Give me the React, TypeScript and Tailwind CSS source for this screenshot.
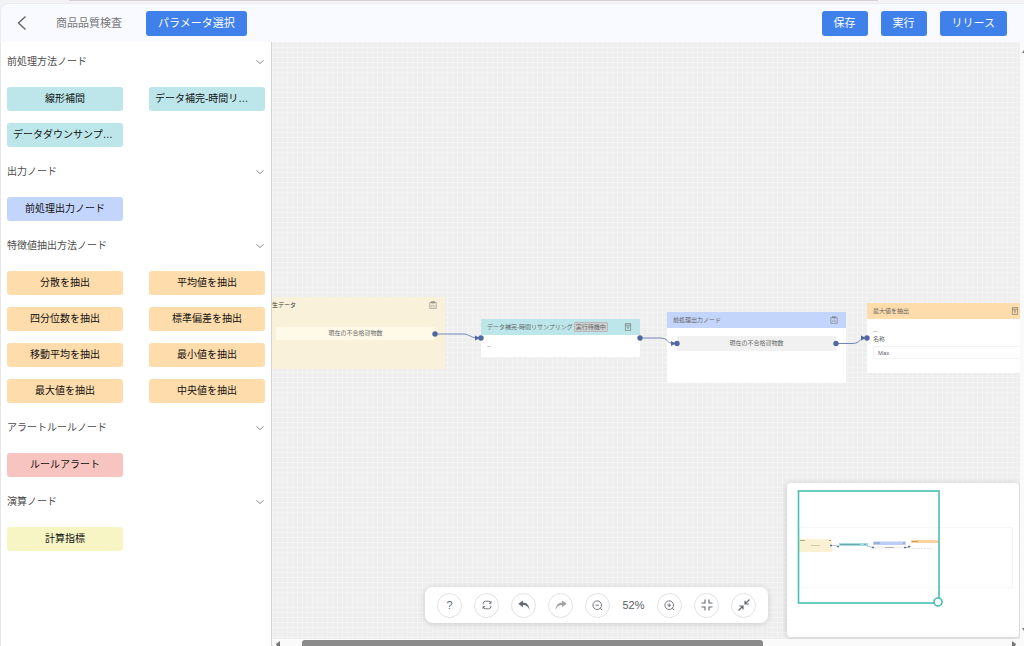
import React, { useState } from 'react';

interface NodeGroup {
  title: string;
  color: string;
  items: string[];
}

const NODE_GROUPS: NodeGroup[] = [
  {
    title: '前処理方法ノード',
    color: 'bg-[#bce6ea]',
    items: ['線形補間', 'データ補完-時間リサンプリング', 'データダウンサンプリング'],
  },
  { title: '出力ノード', color: 'bg-[#c4d5fb]', items: ['前処理出力ノード'] },
  {
    title: '特徴値抽出方法ノード',
    color: 'bg-[#fedcab]',
    items: [
      '分散を抽出',
      '平均値を抽出',
      '四分位数を抽出',
      '標準偏差を抽出',
      '移動平均を抽出',
      '最小値を抽出',
      '最大値を抽出',
      '中央値を抽出',
    ],
  },
  { title: 'アラートルールノード', color: 'bg-[#f7c4bf]', items: ['ルールアラート'] },
  { title: '演算ノード', color: 'bg-[#f7f5c4]', items: ['計算指標'] },
];

// Longest label (in characters) that fits on a palette button
const MAX_LABEL = 9;

const PrimaryButton: React.FC<{ children: React.ReactNode }> = ({ children }) => (
  <button type="button" className="h-[25px] rounded-[3px] bg-[#3f80ea] px-3 text-[11px] leading-4 text-white hover:bg-[#2f6fd8]">
    {children}
  </button>
);

const Header: React.FC = () => (
  <header className="flex h-[39px] shrink-0 items-center rounded-tl-lg border-t border-l border-[#ebebf0] bg-[#f8faff] pr-[17px]">
    <button type="button" aria-label="戻る" className="ml-4 mr-[29px] text-[#666]">
      <svg className="h-4 w-[10px]" viewBox="0 0 10 16" fill="none" stroke="currentColor" strokeWidth="1.4">
        <path d="M8.5 1.5 1.5 8l7 6.5" />
      </svg>
    </button>
    <h1 className="mr-6 text-[11px] leading-4 text-[#777]">商品品質検査</h1>
    <PrimaryButton>パラメータ選択</PrimaryButton>
    <div className="ml-auto flex gap-[13px]">
      <PrimaryButton>保存</PrimaryButton>
      <PrimaryButton>実行</PrimaryButton>
      <PrimaryButton>リリース</PrimaryButton>
    </div>
  </header>
);

const PaletteItem: React.FC<{ label: string; color: string }> = ({ label, color }) => {
  const isLong = label.length > MAX_LABEL;

  return (
    <button
      type="button"
      draggable
      title={label}
      className={`h-6 min-w-0 rounded-[3px] px-[6px] text-[10px] leading-4 whitespace-nowrap text-[#111] ${isLong ? 'text-left' : 'text-center'} ${color}`}
    >
      {isLong ? `${label.slice(0, MAX_LABEL)}…` : label}
    </button>
  );
};

const Group: React.FC<{ group: NodeGroup }> = ({ group }) => {
  const [open, setOpen] = useState(true);

  return (
    <section className="mb-[9px]">
      <button
        type="button"
        aria-expanded={open}
        onClick={() => setOpen(!open)}
        className="flex h-8 w-full items-center justify-between text-[10px] leading-4 text-[#4c4c4c]"
      >
        {group.title}
        <svg className={open ? 'mr-px h-2 w-2' : 'mr-px h-2 w-2 -rotate-90'} viewBox="0 0 8 8" fill="none" stroke="#777" strokeWidth="0.9">
          <path d="M0.5 2.2 4 5.7l3.5-3.5" />
        </svg>
      </button>
      {open && (
        <div className="mt-[9px] grid grid-cols-2 gap-x-[26px] gap-y-3">
          {group.items.map((item) => (
            <PaletteItem key={item} label={item} color={group.color} />
          ))}
        </div>
      )}
    </section>
  );
};

const ClipIcon: React.FC = () => (
  <svg className="h-2 w-2 shrink-0" viewBox="0 0 8 8" fill="none" stroke="#777" strokeWidth="0.6">
    <path d="M0.8 1.5h6.4v5.8H0.8zM2.6 0.5h2.8v1.6H2.6zM2.4 5.7V4.4M4 5.7V3.6M5.4 5.7V4.6" />
  </svg>
);

const ArchiveIcon: React.FC = () => (
  <svg className="h-2 w-2 shrink-0" viewBox="0 0 8 8" fill="none" stroke="#666" strokeWidth="0.6">
    <path d="M1.4 0.6h5.2v6.8H1.4zM1.4 2.2h5.2M2.8 3.8h2.4M4 3.8v2.2" />
  </svg>
);

// Wires between the node ports, in canvas coordinates
const Edges: React.FC = () => (
  <svg className="pointer-events-none absolute top-0 left-0 h-[400px] w-[748px]" viewBox="0 0 748 400" fill="none">
    <g stroke="#6f88b8" strokeWidth="1">
      <path d="M163 292h28c7 0 7 4 15 4" />
      <path d="M368 296h20c9 0 6 5.5 14 5.5" />
      <path d="M564 301.5h16c9 0 7-5.5 13-5.5" />
    </g>
    <g fill="#4f69a0">
      <path d="M203 293.5l5 2.5-5 2.5zM399 299l5 2.5-5 2.5zM589 293.5l5 2.5-5 2.5z" />
      <circle cx="163" cy="292" r="2.7" />
      <circle cx="209" cy="296" r="2.7" />
      <circle cx="368" cy="296" r="2.7" />
      <circle cx="405" cy="301.5" r="2.7" />
      <circle cx="564" cy="301.5" r="2.7" />
      <circle cx="595" cy="296" r="2.7" />
    </g>
  </svg>
);

const FlowNodes: React.FC = () => (
  <div className="text-[6px] leading-[8px] text-[#666]">
    <div className="absolute top-[255px] left-0 h-[72px] w-[173px] bg-[#f9f1da]">
      <div className="flex h-4 items-center justify-between pr-2 text-[#333]">
        <span>生データ</span>
        <ClipIcon />
      </div>
      <div className="mt-[14px] mr-[10px] ml-1 h-[13px] bg-[#fffae8] text-center leading-[13px]">現在の不合格貨物数</div>
    </div>

    <div className="absolute top-[277px] left-[209px] h-[38px] w-[159px] bg-white">
      <div className="flex h-4 items-center bg-[#bce6ea] pr-2 pl-[6px] whitespace-nowrap">
        <span>データ補完-時間リサンプリング</span>
        <span className="ml-px rounded-[1px] border border-[#b9b9bb] bg-[#cfcfd1] px-px">実行待機中</span>
        <span className="ml-auto">
          <ArchiveIcon />
        </span>
      </div>
      <p className="mt-[7px] pl-[6px]">--</p>
    </div>

    <div className="absolute top-[270px] left-[395px] h-[71px] w-[179px] bg-white">
      <div className="flex h-4 items-center justify-between bg-[#c4d5fb] pr-2 pl-[6px]">
        <span>前処理出力ノード</span>
        <ClipIcon />
      </div>
      <div className="mx-[10px] mt-2 h-[15px] bg-[#f1f1f1] text-center leading-[15px]">現在の不合格貨物数</div>
    </div>

    <div className="absolute top-[261px] left-[595px] h-[70px] w-[153px] bg-white">
      <div className="flex h-4 items-center justify-between bg-[#fedcab] pr-px pl-[6px]">
        <span>最大値を抽出</span>
        <ArchiveIcon />
      </div>
      <p className="mt-2 pl-[6px]">--</p>
      <label htmlFor="node-name" className="block pl-[6px]">
        名称
      </label>
      <div className="mt-[3px] pl-[6px]">
        <input id="node-name" defaultValue="Max" className="block h-[13px] w-full border-y border-l border-[#f3f3f3] pl-1 outline-none" />
      </div>
    </div>
    <Edges />
  </div>
);

const RoundButton: React.FC<{ label: string; disabled?: boolean; children: React.ReactNode }> = ({ label, disabled, children }) => (
  <button
    type="button"
    aria-label={label}
    disabled={disabled}
    className="flex h-[25px] w-[25px] items-center justify-center rounded-full border border-[#e2e2e2] bg-white text-[#666a71] disabled:text-[#a3a3a3]"
  >
    {children}
  </button>
);

const Toolbar: React.FC = () => (
  <div className="absolute right-[252px] bottom-4 flex h-9 items-center gap-3 rounded-lg bg-white px-3 shadow-[0_1px_6px_rgba(0,0,0,0.15)]">
    <RoundButton label="ヘルプ">
      <span className="text-[11px] leading-4">?</span>
    </RoundButton>
    <RoundButton label="更新">
      <svg className="h-[10px] w-[10px]" viewBox="0 0 10 10" fill="none" stroke="currentColor" strokeWidth="0.9">
        <path d="M1.2 4.4V3.6Q1.2 1.2 3.600 1.2h2.800Q8.400 1.2 8.800 3.200M8.8 5.6v0.8Q8.8 8.8 6.4 8.8H3.6Q1.6 8.8 1.2 6.8M9 1.2v2.100H7M1 8.8V6.700h2" />
      </svg>
    </RoundButton>
    <RoundButton label="元に戻す">
      <svg className="h-[11px] w-3" viewBox="0 0 12 11" fill="currentColor">
        <path d="M0.3 3.8 4.9 0.5v2.1c3.8 0.1 6.2 2.5 6.7 7.4C10.2 6.7 8.4 5.1 4.9 5.1v2.1z" />
      </svg>
    </RoundButton>
    <RoundButton label="やり直し" disabled>
      <svg className="h-[11px] w-3" viewBox="0 0 12 11" fill="currentColor">
        <path d="M11.7 3.8 7.1 0.5v2.1C3.3 2.7 0.9 5.1 0.4 10 1.8 6.7 3.6 5.1 7.1 5.1v2.1z" />
      </svg>
    </RoundButton>
    <RoundButton label="縮小">
      <svg className="h-[11px] w-[11px]" viewBox="0 0 11 11" fill="none" stroke="currentColor" strokeWidth="0.9">
        <circle cx="5.2" cy="5.2" r="4.3" />
        <path d="M3.4 5.2H7M8.3 8.3l1.7 1.7" />
      </svg>
    </RoundButton>
    <span className="w-[23px] text-center text-[11px] leading-4 text-[#5a5e66]">52%</span>
    <RoundButton label="拡大">
      <svg className="h-[11px] w-[11px]" viewBox="0 0 11 11" fill="none" stroke="currentColor" strokeWidth="0.9">
        <circle cx="5.2" cy="5.2" r="4.3" />
        <path d="M3.4 5.2H7M5.2 3.4V7M8.3 8.3l1.7 1.7" />
      </svg>
    </RoundButton>
    <RoundButton label="画面に合わせる">
      <svg className="h-3 w-3" viewBox="0 0 12 12" fill="none" stroke="currentColor" strokeWidth="1.1">
        <path d="M4 0.5V4H0.5M8 0.5V4h3.5M4 11.5V8H0.5M8 11.5V8h3.5" />
      </svg>
    </RoundButton>
    <RoundButton label="全画面を終了">
      <svg className="h-3 w-3" viewBox="0 0 12 12" fill="none" stroke="currentColor" strokeWidth="1.2">
        <path d="M11.5 0.5 7 5M7 1.7V5h3.7M0.5 11.5 5 7M1.3 7H5v3.5" />
      </svg>
    </RoundButton>
  </div>
);

const MiniMap: React.FC = () => (
  <div className="absolute right-px bottom-0.5 rounded-sm bg-white shadow-[0_1px_6px_rgba(0,0,0,0.18)]">
    <svg className="h-[154px] w-[232px]" viewBox="0 0 232 154" fill="none">
      <rect x="12" y="44.5" width="213.5" height="60" stroke="#f6f6f6" />
      <rect x="12" y="56" width="33" height="13" fill="#faf0d2" />
      <path d="M13 57.5h5M42 57.5h2" stroke="#b3a586" />
      <path d="M24 62.5h9" stroke="#cfc6ab" />
      <rect x="52" y="60" width="29" height="3" fill="#a5dbdf" />
      <path d="M53 61.5h20M77 61.5h2" stroke="#5d9da3" strokeWidth="0.8" />
      <rect x="86" y="58.5" width="33" height="3.5" fill="#bccdf6" />
      <path d="M87 60h6M116 60h2" stroke="#6b80b8" strokeWidth="0.8" />
      <path d="M87 64.5h30" stroke="#eeeeee" strokeWidth="2" />
      <path d="M98 64.5h9" stroke="#aaaaaa" strokeWidth="0.8" />
      <rect x="124" y="57" width="28" height="3" fill="#fcd39a" />
      <path d="M125 58.5h6" stroke="#b99558" strokeWidth="0.8" />
      <path d="M125 65.5h21" stroke="#dddddd" strokeWidth="0.8" strokeDasharray="2 1" />
      <path d="M43 62.5h5l3 1M80 63l6 1.5M117 64.5h4l3-1" stroke="#8093b5" strokeWidth="0.6" />
      <path d="M43 61.8h2v1.5h-2zM50 62.8h2v1.5h-2zM85 63.8h2v1.5h-2zM117 63.8h2v1.5h-2zM121 62.8h2v1.5h-2z" fill="#5b6f9a" />
      <rect x="11.5" y="8" width="140.5" height="112" stroke="#48bfb3" strokeWidth="1.6" />
      <circle cx="151" cy="119" r="4" fill="#fff" stroke="#48bfb3" strokeWidth="1.6" />
    </svg>
  </div>
);

const App: React.FC = () => {
  return (
    <div className="flex h-screen flex-col bg-[#f3f3f6] font-['Liberation_Sans','Noto_Sans_CJK_JP',sans-serif]">
      <div className="flex h-[3px] shrink-0 items-start">
        <div className="ml-[69px] h-px w-[79%] bg-[#d5d1d4]" />
      </div>
      <Header />

      <main className="flex min-h-0 flex-1">
        <aside className="w-[272px] shrink-0 overflow-hidden border-x border-l-[#e6e6e6] border-r-[#d4d4d4] bg-white pt-1 pr-[6px] pl-[6px]">
          {NODE_GROUPS.map((group) => (
            <Group key={group.title} group={group} />
          ))}
        </aside>

        <div className="flex min-w-0 flex-1 flex-col">
          <div className="flex min-h-0 flex-1">
            <div className="relative flex-1 overflow-hidden bg-[#eeeeee] bg-[linear-gradient(#f3f3f3_1px,transparent_1px),linear-gradient(90deg,#f3f3f3_1px,transparent_1px)] bg-[size:5px_5px]">
              <FlowNodes />
              <Toolbar />
              <MiniMap />
            </div>
            {/* Vertical scroll track */}
            <div className="flex w-1 shrink-0 flex-col items-end justify-between bg-[#fafafa] pt-2 pb-2">
              <svg className="h-[3px] w-0.5" viewBox="0 0 2 3" fill="#777">
                <path d="M2 0v3H0z" />
              </svg>
              <svg className="h-[3px] w-0.5" viewBox="0 0 2 3" fill="#777">
                <path d="M2 3V0H0z" />
              </svg>
            </div>
          </div>
          {/* Horizontal scroll track */}
          <div className="flex h-[7px] shrink-0 items-end bg-[#fafafa] pr-2 pl-1">
            <svg className="h-[5px] w-1" viewBox="0 0 4 5" fill="#777">
              <path d="M4 0v5H1L0 3z" />
            </svg>
            <div className="mx-[22px] h-[6px] flex-1">
              <div className="h-full w-[67%] rounded-t-[3px] bg-[#8b8b8b]" />
            </div>
            <svg className="h-[5px] w-1" viewBox="0 0 4 5" fill="#777">
              <path d="M0 0v5h3l1-2z" />
            </svg>
          </div>
        </div>
      </main>
    </div>
  );
};

export default App;
